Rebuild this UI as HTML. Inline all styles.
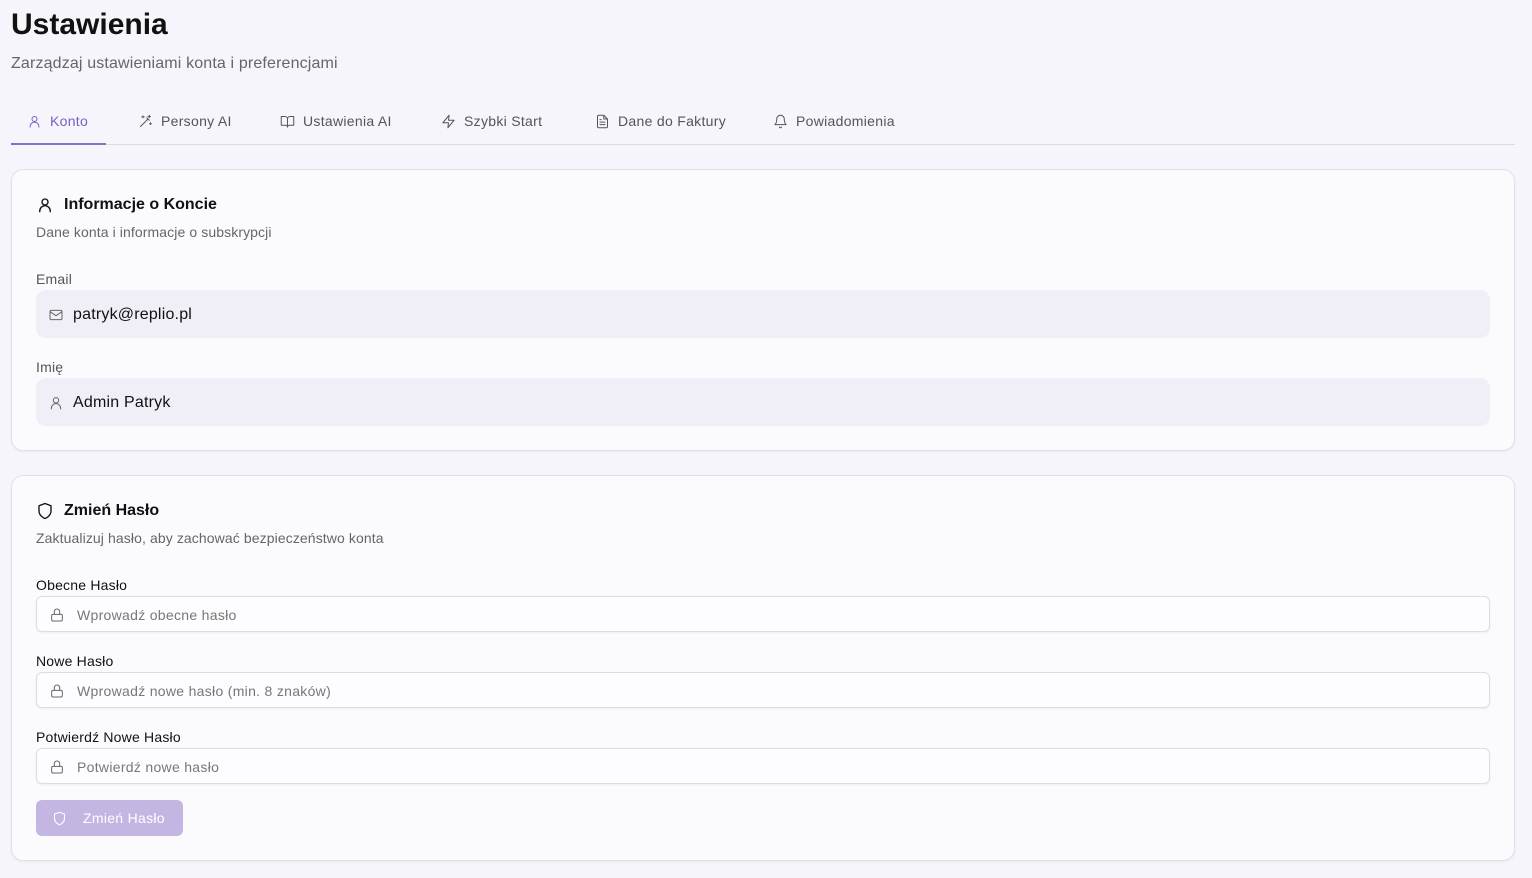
<!DOCTYPE html>
<html><head><meta charset="utf-8"><style>
*{box-sizing:border-box;margin:0;padding:0}
body{width:1532px;height:878px;background:#f5f5fb;font-family:"Liberation Sans",sans-serif;color:#111;position:relative;overflow:hidden}
.abs{position:absolute}
h1{position:absolute;left:11px;top:8px;font-size:30px;font-weight:700;color:#111}
.sub{left:11px;top:55px;font-size:16px;color:#666;letter-spacing:.15px}
.tabs{left:11px;top:100px;width:1504px;height:45px;border-bottom:1px solid #dcdbe3}
.tab{position:absolute;top:13px;font-size:14px;color:#555;display:flex;align-items:center;gap:8px;letter-spacing:.3px}
.tab svg{width:15px;height:15px;fill:none;stroke:currentColor;stroke-width:1.6;stroke-linecap:round;stroke-linejoin:round}
.card{position:absolute;left:11px;width:1504px;background:#fbfbfe;border:1px solid #e1e0e8;border-radius:12px;box-shadow:0 1px 2px rgba(0,0,0,.05)}
.ct{position:absolute;left:24px;font-size:16px;font-weight:700;display:flex;align-items:center;gap:10px}
.ct svg{width:18px;height:18px;fill:none;stroke:#111;stroke-width:1.8;stroke-linecap:round;stroke-linejoin:round}
.cd{position:absolute;left:24px;font-size:14px;color:#666;letter-spacing:.1px}
.lbl{position:absolute;left:24px;font-size:14px;letter-spacing:.2px}
.ro{position:absolute;left:24px;width:1454px;height:48px;border-radius:10px;background:#f0eef7;display:flex;align-items:center;padding-left:12px;padding-top:2px;gap:9px;font-size:16px;color:#111;letter-spacing:.2px}
.ro svg,.in svg{width:16px;height:16px;fill:none;stroke:#666;stroke-width:1.5;stroke-linecap:round;stroke-linejoin:round}
.in{position:absolute;left:24px;width:1454px;height:36px;border-radius:6px;background:#fdfdff;border:1px solid #dddce4;box-shadow:0 1px 2px rgba(0,0,0,.06);display:flex;align-items:center;padding-left:12px;padding-top:1px;gap:12px;font-size:14px;color:#777;letter-spacing:.3px}
.btn{position:absolute;left:24px;top:324px;width:147px;height:36px;border-radius:6px;background:#c3b6e2;color:#fff;font-size:14px;display:flex;align-items:center;padding-left:16px;gap:16px;letter-spacing:.3px}
.btn svg{width:15px;height:15px;fill:none;stroke:#fff;stroke-width:1.8}
</style></head><body>
<h1>Ustawienia</h1>
<div class="abs sub">Zarządzaj ustawieniami konta i preferencjami</div>
<div class="abs tabs">
 <div class="abs" style="left:0;bottom:-1px;width:95px;height:2px;background:#8b6cc9"></div>
 <div class="tab" style="left:16px;color:#7c5cc4"><svg viewBox="0 0 24 24"><circle cx="12" cy="8" r="4"/><path d="M5 21v-1a7 7 0 0 1 14 0v1"/></svg>Konto</div>
 <div class="tab" style="left:127px"><svg viewBox="0 0 24 24"><path d="M4 20L16 8M14 6l4 4M18 2v4M20 4h-4M8 3v3M10 4.5H6M20 14v3M21.5 15.5h-3"/></svg>Persony AI</div>
 <div class="tab" style="left:269px"><svg viewBox="0 0 24 24"><path d="M2 4h6a4 4 0 0 1 4 4v13a3 3 0 0 0-3-3H2zM22 4h-6a4 4 0 0 0-4 4v13a3 3 0 0 1 3-3h7z"/></svg>Ustawienia AI</div>
 <div class="tab" style="left:430px"><svg viewBox="0 0 24 24"><path d="M13 2L3 14h9l-1 8 10-12h-9z"/></svg>Szybki Start</div>
 <div class="tab" style="left:584px"><svg viewBox="0 0 24 24"><path d="M14 2H6a2 2 0 0 0-2 2v16a2 2 0 0 0 2 2h12a2 2 0 0 0 2-2V8zM14 2v6h6M8 13h8M8 17h8M8 9h2"/></svg>Dane do Faktury</div>
 <div class="tab" style="left:762px"><svg viewBox="0 0 24 24"><path d="M6 8a6 6 0 0 1 12 0c0 7 3 9 3 9H3s3-2 3-9M10.3 21a1.9 1.9 0 0 0 3.4 0"/></svg>Powiadomienia</div>
</div>

<div class="card" style="top:169px;height:282px">
 <div class="ct" style="top:26px"><svg viewBox="0 0 24 24"><circle cx="12" cy="8" r="4"/><path d="M5 21v-1a7 7 0 0 1 14 0v1"/></svg>Informacje o Koncie</div>
 <div class="cd" style="top:54px">Dane konta i informacje o subskrypcji</div>
 <div class="lbl" style="top:101px;color:#555">Email</div>
 <div class="ro" style="top:120px"><svg viewBox="0 0 24 24"><rect x="3" y="5" width="18" height="14" rx="2"/><path d="M3 7l9 6 9-6"/></svg>patryk@replio.pl</div>
 <div class="lbl" style="top:189px;color:#555">Imię</div>
 <div class="ro" style="top:208px"><svg viewBox="0 0 24 24"><circle cx="12" cy="8" r="4"/><path d="M5 21v-1a7 7 0 0 1 14 0v1"/></svg>Admin Patryk</div>
</div>

<div class="card" style="top:475px;height:386px">
 <div class="ct" style="top:26px"><svg viewBox="0 0 24 24"><path d="M12 22s8-3 8-10V5l-8-3-8 3v7c0 7 8 10 8 10z"/></svg>Zmień Hasło</div>
 <div class="cd" style="top:54px">Zaktualizuj hasło, aby zachować bezpieczeństwo konta</div>
 <div class="lbl" style="top:101px">Obecne Hasło</div>
 <div class="in" style="top:120px"><svg viewBox="0 0 24 24"><rect x="4" y="11" width="16" height="10" rx="2"/><path d="M8 11V7a4 4 0 0 1 8 0v4"/></svg>Wprowadź obecne hasło</div>
 <div class="lbl" style="top:177px">Nowe Hasło</div>
 <div class="in" style="top:196px"><svg viewBox="0 0 24 24"><rect x="4" y="11" width="16" height="10" rx="2"/><path d="M8 11V7a4 4 0 0 1 8 0v4"/></svg>Wprowadź nowe hasło (min. 8 znaków)</div>
 <div class="lbl" style="top:253px">Potwierdź Nowe Hasło</div>
 <div class="in" style="top:272px"><svg viewBox="0 0 24 24"><rect x="4" y="11" width="16" height="10" rx="2"/><path d="M8 11V7a4 4 0 0 1 8 0v4"/></svg>Potwierdź nowe hasło</div>
 <div class="btn"><svg viewBox="0 0 24 24"><path d="M12 22s8-3 8-10V5l-8-3-8 3v7c0 7 8 10 8 10z"/></svg>Zmień Hasło</div>
</div>
</body></html>
